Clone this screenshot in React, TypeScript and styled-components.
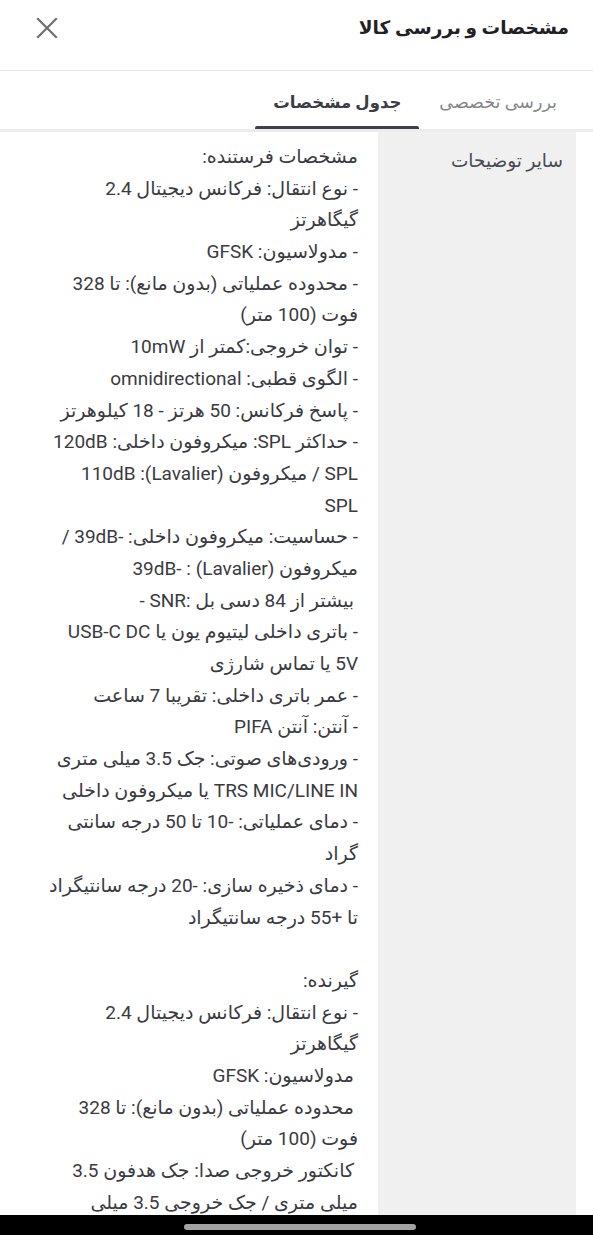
import * as React from 'react'
import styled, { createGlobalStyle } from 'styled-components'

const GlobalStyle = createGlobalStyle`
    html, body {
        margin: 0;
        padding: 0;
        background: #ffffff;
    }
    body {
        font-family: Roboto, "DejaVu Sans", sans-serif;
        color: #3f4046;
    }
`

interface SpecLine {
    text: string
    indent?: boolean
}

const specLines: SpecLine[] = [
    { text: 'مشخصات فرستنده:' },
    { text: '- نوع انتقال: فرکانس دیجیتال 2.4' },
    { text: 'گیگاهرتز' },
    { text: '- مدولاسیون: GFSK' },
    { text: '- محدوده عملیاتی (بدون مانع): تا 328' },
    { text: 'فوت (100 متر)' },
    { text: '- توان خروجی:کمتر از 10mW' },
    { text: '- الگوی قطبی: omnidirectional' },
    { text: '- پاسخ فرکانس: 50 هرتز - 18 کیلوهرتز' },
    { text: '- حداکثر SPL: میکروفون داخلی: 120dB' },
    { text: 'SPL / میکروفون (Lavalier): 110dB' },
    { text: 'SPL' },
    { text: '- حساسیت: میکروفون داخلی: -39dB /' },
    { text: 'میکروفون (Lavalier) : -39dB' },
    { text: 'بیشتر از 84 دسی بل :SNR -', indent: true },
    { text: '- باتری داخلی لیتیوم یون یا USB-C DC' },
    { text: '5V یا تماس شارژی' },
    { text: '- عمر باتری داخلی: تقریبا 7 ساعت' },
    { text: '- آنتن: آنتن PIFA' },
    { text: '- ورودی‌های صوتی: جک 3.5 میلی متری' },
    { text: 'TRS MIC/LINE IN یا میکروفون داخلی' },
    { text: '- دمای عملیاتی:  -10 تا 50 درجه سانتی' },
    { text: 'گراد' },
    { text: '- دمای ذخیره سازی: -20 درجه سانتیگراد' },
    { text: 'تا +55 درجه سانتیگراد' },
    { text: '' },
    { text: 'گیرنده:' },
    { text: '- نوع انتقال: فرکانس دیجیتال 2.4' },
    { text: 'گیگاهرتز' },
    { text: 'مدولاسیون: GFSK', indent: true },
    { text: 'محدوده عملیاتی (بدون مانع): تا 328', indent: true },
    { text: 'فوت (100 متر)' },
    { text: 'کانکتور خروجی صدا: جک هدفون 3.5', indent: true },
    { text: 'میلی متری / جک خروجی 3.5 میلی' },
]

const CloseIcon = () => (
    <svg width="22" height="22" viewBox="0 0 22 22" fill="none">
        <path
            d="M2 2L20 20M20 2L2 20"
            stroke="#6f6f73"
            strokeWidth="2.2"
            strokeLinecap="square"
        />
    </svg>
)

export default function App() {
    const [activeTab, setActiveTab] = React.useState('specs')

    return (
        <PageStyled dir="rtl">
            <GlobalStyle />
            <HeaderStyled>
                <TitleStyled>مشخصات و بررسی کالا</TitleStyled>
                <CloseBtnStyled title="بستن">
                    <CloseIcon />
                </CloseBtnStyled>
            </HeaderStyled>
            <TabBarStyled>
                <TabStyled
                    $active={activeTab === 'review'}
                    onClick={() => setActiveTab('review')}
                >
                    بررسی تخصصی
                </TabStyled>
                <TabStyled
                    $active={activeTab === 'specs'}
                    onClick={() => setActiveTab('specs')}
                >
                    جدول مشخصات
                </TabStyled>
            </TabBarStyled>
            <ContentStyled>
                <SpecRowStyled>
                    <SpecKeyStyled>سایر توضیحات</SpecKeyStyled>
                    <SpecValueStyled>
                        {specLines.map((line, i) => (
                            <SpecLineStyled key={i} $indent={line.indent}>
                                {line.text || '\u00a0'}
                            </SpecLineStyled>
                        ))}
                    </SpecValueStyled>
                </SpecRowStyled>
            </ContentStyled>
            <NavBarStyled>
                <HomeIndicatorStyled />
            </NavBarStyled>
        </PageStyled>
    )
}

const PageStyled = styled.div`
    display: flex;
    flex-direction: column;
    height: 100vh;
    overflow: hidden;
    background: #ffffff;
`

const HeaderStyled = styled.header`
    display: flex;
    align-items: center;
    justify-content: space-between;
    height: 56px;
    padding: 0 24px 14px 36px;
    border-bottom: 1px solid #e4e4e6;
    flex-shrink: 0;
`

const TitleStyled = styled.h1`
    margin: 0;
    font-size: 18.5px;
    font-weight: 700;
    color: #202124;
`

const CloseBtnStyled = styled.button`
    display: flex;
    align-items: center;
    justify-content: center;
    padding: 0;
    border: none;
    background: none;
    cursor: pointer;
`

const TabBarStyled = styled.nav`
    display: flex;
    align-items: stretch;
    gap: 2px;
    height: 58px;
    padding-right: 18px;
    border-bottom: 3px solid #ececed;
    flex-shrink: 0;
`

const TabStyled = styled.button<{ $active?: boolean }>`
    position: relative;
    display: flex;
    align-items: center;
    padding: 4px 18px 0;
    border: none;
    background: none;
    cursor: pointer;
    font-family: Roboto, "DejaVu Sans", sans-serif;
    font-size: ${(p) => (p.$active ? '16.5px' : '17.5px')};
    font-weight: ${(p) => (p.$active ? 700 : 400)};
    color: ${(p) => (p.$active ? '#3b3c44' : '#85868c')};

    &::after {
        content: '';
        position: absolute;
        left: 0;
        right: 0;
        bottom: 0;
        height: 3px;
        border-radius: 2px 2px 0 0;
        background: ${(p) => (p.$active ? '#404148' : 'transparent')};
    }
`

const ContentStyled = styled.main`
    flex: 1;
    overflow: hidden;
`

const SpecRowStyled = styled.div`
    display: flex;
    align-items: stretch;
    padding-right: 17px;
    min-height: 100%;
`

const SpecKeyStyled = styled.div`
    flex: 0 0 198px;
    box-sizing: border-box;
    padding: 15px 13px 0 0;
    background: #f0f0f1;
    font-size: 18.5px;
    line-height: 28px;
    color: #4a4b52;
`

const SpecValueStyled = styled.div`
    flex: 1;
    padding: 9px 20px 0 0;
`

const SpecLineStyled = styled.div<{ $indent?: boolean }>`
    white-space: nowrap;
    font-size: 19px;
    line-height: 31.68px;
    color: #3a3b41;
    padding-right: ${(p) => (p.$indent ? '4px' : '0')};
`

const NavBarStyled = styled.div`
    display: flex;
    align-items: center;
    height: 20px;
    padding-left: 184px;
    background: #000000;
    flex-shrink: 0;
    direction: ltr;
`

const HomeIndicatorStyled = styled.div`
    width: 232px;
    height: 6px;
    margin-top: 3px;
    border-radius: 3px;
    background: #a3a3a3;
`
